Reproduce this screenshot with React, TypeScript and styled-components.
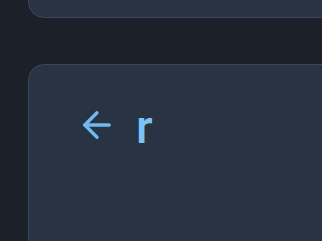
import React from "react";
import styled, { createGlobalStyle } from "styled-components";

const Global = createGlobalStyle`
  html, body {
    margin: 0;
    padding: 0;
    background: #1b2029;
    overflow: hidden;
  }
  body {
    font-family: Roboto, "Liberation Sans", sans-serif;
  }
`;

const Page = styled.div`
  width: 322px;
  height: 241px;
  overflow: hidden;
  background: #1b2029;
`;

const Stack = styled.div`
  display: flex;
  flex-direction: column;
  gap: 46px;
  margin-top: -80px;
  padding-left: 28px;
`;

const Card = styled.section<{ $height: number }>`
  box-sizing: border-box;
  width: 360px;
  height: ${(p) => p.$height}px;
  background: #283343;
  border: 1px solid #3a485b;
  border-radius: 16px;
  flex-shrink: 0;
`;

const Header = styled.div`
  display: flex;
  align-items: center;
  gap: 18px;
  padding: 37px 0 0 47px;
`;

const BackIcon = styled.svg`
  display: block;
  width: 42px;
  height: 42px;
  color: #6fb8f1;
`;

const Title = styled.h1`
  margin: 4px 0 0;
  font-family: Roboto, "Liberation Sans", sans-serif;
  font-size: 47px;
  font-weight: 500;
  line-height: 42px;
  color: #7fc2f6;
`;

export default function App() {
  return (
    <Page>
      <Global />
      <Stack>
        <Card $height={98} />
        <Card $height={260}>
          <Header>
            <BackIcon
              viewBox="0 0 24 24"
              fill="none"
              stroke="currentColor"
              strokeWidth={1.9}
              strokeLinecap="round"
              strokeLinejoin="round"
            >
              <path d="m12 19-7-7 7-7" />
              <path d="M19 12H5" />
            </BackIcon>
            <Title>r</Title>
          </Header>
        </Card>
      </Stack>
    </Page>
  );
}
